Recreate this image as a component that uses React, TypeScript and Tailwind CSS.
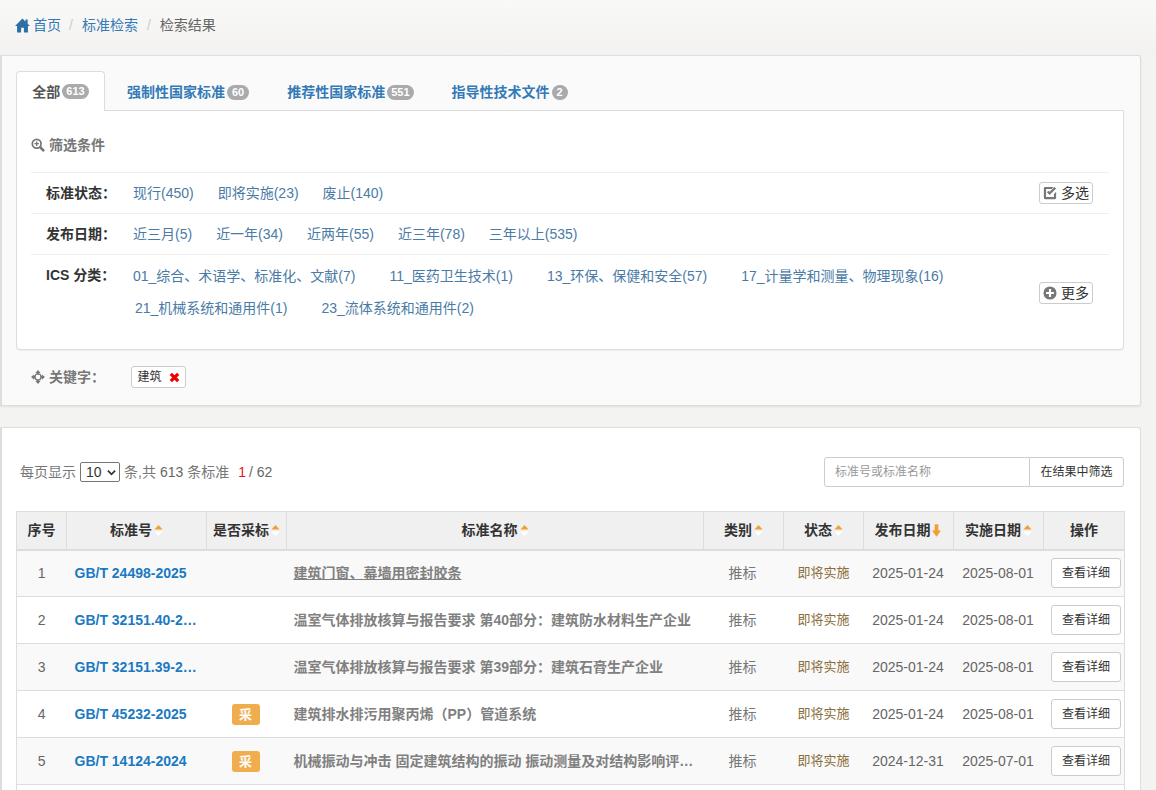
import type { ReactNode } from 'react';

interface Row {
  no: number;
  code: string;
  cai: boolean;
  name: string;
  pub: string;
  impl: string;
}

const rows: Row[] = [
  { no: 1, code: 'GB/T 24498-2025', cai: false, name: '建筑门窗、幕墙用密封胶条', pub: '2025-01-24', impl: '2025-08-01' },
  { no: 2, code: 'GB/T 32151.40-2025', cai: false, name: '温室气体排放核算与报告要求 第40部分：建筑防水材料生产企业', pub: '2025-01-24', impl: '2025-08-01' },
  { no: 3, code: 'GB/T 32151.39-2025', cai: false, name: '温室气体排放核算与报告要求 第39部分：建筑石膏生产企业', pub: '2025-01-24', impl: '2025-08-01' },
  { no: 4, code: 'GB/T 45232-2025', cai: true, name: '建筑排水排污用聚丙烯（PP）管道系统', pub: '2025-01-24', impl: '2025-08-01' },
  { no: 5, code: 'GB/T 14124-2024', cai: true, name: '机械振动与冲击 固定建筑结构的振动 振动测量及对结构影响评价的指南', pub: '2024-12-31', impl: '2025-07-01' },
];

const tabs = [
  { label: '强制性国家标准', count: 60 },
  { label: '推荐性国家标准', count: 551 },
  { label: '指导性技术文件', count: 2 },
];

function Badge({ count }: { count: number }) {
  // short counts get a little more room, as in the original pill
  return (
    <span className={`ml-[2px] inline-block rounded-[10px] bg-[#aaaaaa] text-[11px] leading-[15px] font-bold text-white ${count < 100 ? 'px-[5px]' : 'px-[4px]'}`}>
      {count}
    </span>
  );
}

function SortArrow({ active }: { active?: boolean }) {
  if (active) {
    return (
      <svg viewBox="0 0 10 14" className="ml-px inline-block h-[13px] w-[9px] align-[-2px]">
        <path d="M3 0h4v7h3l-5 7-5-7h3z" fill="#f0a030" />
      </svg>
    );
  }
  return (
    <svg viewBox="0 0 10 14" className="ml-[2px] inline-block h-[13px] w-[9px] align-[-2px]">
      <path d="M5 1l4.500 5h-9z" fill="#f0a030" />
      <path d="M5 13l4.500-5h-9z" fill="#ffffff" />
    </svg>
  );
}

function FilterRow({ label, children, extra, className, labelClass }: { label: string; children: ReactNode; extra?: ReactNode; className?: string; labelClass?: string }) {
  return (
    <div className={`flex border-t border-[#eeeeee] ${className ?? ''}`}>
      <div className={`w-[102px] shrink-0 pl-[15px] font-bold text-[#333333] ${labelClass ?? ''}`}>{label}</div>
      <div className="flex-1">{children}</div>
      {extra}
    </div>
  );
}

function SmallButton({ icon, text }: { icon: ReactNode; text: string }) {
  return (
    <span className="mr-[16px] flex h-[22px] w-[54px] shrink-0 items-center justify-center gap-[4px] self-center rounded-[3px] border border-[#cccccc] bg-white text-[#333333]">
      {icon}
      {text}
    </span>
  );
}

export default function App() {
  return (
    <div className="h-[790px] w-[1156px] overflow-hidden bg-[#f3f3f1] font-['Liberation_Sans','Noto_Sans_CJK_SC',sans-serif] text-[14px] leading-[20px] text-[#777777]">
      <div className="flex h-[55px] items-center bg-gradient-to-b from-[#f9f9f8] to-[#f3f2f0] pb-[5px] pl-[15px]">
        <svg viewBox="0 0 16 16" className="mr-[3px] h-[15px] w-[15px]">
          <path d="M8 .5L0 8.500h2.200V15.500h4.300v-5h3v5h4.300V8.500H16l-2.500-2.500V1.500h-2.300v2.200z" fill="#2f6fa8" />
        </svg>
        <span className="text-[#337ab7]">首页</span>
        <span className="mr-[9px] ml-[8px] text-[#cccccc]">/</span>
        <span className="text-[#337ab7]">标准检索</span>
        <span className="mr-[9px] ml-[9px] text-[#cccccc]">/</span>
        <span className="text-[#666666]">检索结果</span>
      </div>

      <div className="h-[351px] w-[1141px] rounded-r-[3px] border border-l-2 border-[#dddddd] bg-[#fafafa] pt-[15px] pr-[16px] pl-[14px] shadow-[0_1px_2px_rgba(0,0,0,0.08)]">
        <div className="flex h-[39px] items-stretch">
          <div className="z-10 flex h-[40px] w-[89px] items-center justify-center rounded-t-[4px] border border-b-0 border-[#dddddd] bg-white font-bold text-[#555555]">
            全部<Badge count={613} />
          </div>
          <div className="flex gap-[38px] pl-[22px]">
            {tabs.map((t) => (
              <div key={t.label} className="flex items-center pt-[3px] font-bold text-[#337ab7]">
                {t.label}
                <Badge count={t.count} />
              </div>
            ))}
          </div>
        </div>
        <div className="h-[240px] rounded-b-[4px] border border-[#dddddd] bg-white px-[14px] shadow-[0_1px_1px_rgba(0,0,0,0.05)]">
          <div className="flex h-[61px] items-center gap-[4px] pt-[6px] font-bold text-[#777777]">
            <svg viewBox="0 0 16 16" className="h-[14px] w-[14px]">
              <circle cx="6.500" cy="6.500" r="5" fill="none" stroke="#777777" strokeWidth="2" />
              <path d="M10 10l5 5" stroke="#777777" strokeWidth="3" />
              <path d="M6.500 4v5M4 6.500h5" stroke="#777777" strokeWidth="1.500" />
            </svg>
            筛选条件
          </div>
          <FilterRow
            label="标准状态："
            className="h-[41px] items-center"
            extra={
              <SmallButton
                text="多选"
                icon={
                  <svg viewBox="0 0 16 16" className="h-[14px] w-[14px]">
                    <path d="M12.500 9v3.500h-9v-9H10l2-2.500H2.500A1.500 1.500 0 0 0 1 2.500v11A1.500 1.500 0 0 0 2.500 15h11a1.500 1.500 0 0 0 1.500-1.500V6.500z" fill="#777777" />
                    <path d="M4.500 7l3 3.200L15 2.800 13.200 1 7.500 6.700 6.200 5.400z" fill="#777777" />
                  </svg>
                }
              />
            }
          >
            <div className="flex gap-[24px] text-[#4a7ba6]">
              <span>现行(450)</span>
              <span>即将实施(23)</span>
              <span>废止(140)</span>
            </div>
          </FilterRow>
          <FilterRow label="发布日期：" className="h-[41px] items-center">
            <div className="flex gap-[24px] text-[#4a7ba6]">
              <span>近三月(5)</span>
              <span>近一年(34)</span>
              <span>近两年(55)</span>
              <span>近三年(78)</span>
              <span>三年以上(535)</span>
            </div>
          </FilterRow>
          <FilterRow
            label="ICS 分类："
            className="h-[75px] pt-[11px]"
            labelClass="mt-[-1px]"
            extra={
              <div className="flex items-center self-stretch pb-[9px]">
                <SmallButton
                  text="更多"
                  icon={
                    <svg viewBox="0 0 16 16" className="h-[14px] w-[14px]">
                      <circle cx="8" cy="8" r="7.500" fill="#777777" />
                      <path d="M8 3.500v9M3.500 8h9" stroke="#ffffff" strokeWidth="2.500" />
                    </svg>
                  }
                />
              </div>
            }
          >
            <div className="flex gap-[34px] text-[#4a7ba6]">
              <span>01_综合、术语学、标准化、文献(7)</span>
              <span>11_医药卫生技术(1)</span>
              <span>13_环保、保健和安全(57)</span>
              <span>17_计量学和测量、物理现象(16)</span>
            </div>
            <div className="mt-[12px] flex gap-[34px] pl-[2px] text-[#4a7ba6]">
              <span>21_机械系统和通用件(1)</span>
              <span>23_流体系统和通用件(2)</span>
            </div>
          </FilterRow>
        </div>
        <div className="mt-[16px] flex h-[22px] items-center pl-[15px]">
          <svg viewBox="0 0 16 16" className="mr-[4px] h-[14px] w-[14px]">
            <path d="M8 0l3 3.500H9.200V5H6.800V3.500H5zM8 16l-3-3.500h1.800V11h2.400v1.500H11zM0 8l3.500-3v1.800H5v2.400H3.500V11zM16 8l-3.500 3V9.200H11V6.800h1.500V5z" fill="#777777" />
            <circle cx="8" cy="8" r="3.500" fill="none" stroke="#777777" strokeWidth="1.500" />
          </svg>
          <span className="w-[82px] font-bold">关键字：</span>
          <span className="flex h-[22px] w-[55px] items-center justify-center gap-[7px] rounded-[3px] border border-[#cccccc] bg-white text-[12px] text-[#333333]">
            建筑
            <svg viewBox="0 0 12 12" className="h-[11px] w-[11px]">
              <path d="M2 2l8 8M10 2l-8 8" stroke="#ee0000" strokeWidth="3.500" />
            </svg>
          </span>
        </div>
      </div>

      <div className="mt-[21px] h-[400px] w-[1141px] rounded-tr-[3px] border-t border-r border-l-2 border-[#dddddd] bg-white pr-[16px] pl-[14px]">
        <div className="flex h-[83px] items-start justify-between pt-[29px]">
          <div className="flex h-[30px] items-center pl-[4px]">
            每页显示
            <span className="mr-[4px] ml-[4px] flex h-[20px] w-[40px] items-center justify-between rounded-[2px] border border-[#767676] bg-white pr-[3px] pl-[5px] text-[#333333]">
              10
              <svg viewBox="0 0 10 10" className="h-[9px] w-[9px]">
                <path d="M1 3l4 4 4-4" fill="none" stroke="#333333" strokeWidth="2" />
              </svg>
            </span>
            条,共 <span className="mx-[4px] text-[#666666]">613</span> 条标准
            <span className="mr-[3px] ml-[9px] text-[#ee1111]">1</span>
            <span className="text-[#666666]">/ 62</span>
          </div>
          <div className="flex h-[30px] w-[300px] text-[12px]">
            <div className="flex flex-1 items-center rounded-l-[3px] border border-[#cccccc] bg-white pl-[10px] text-[#999999]">标准号或标准名称</div>
            <div className="flex w-[94px] items-center justify-center rounded-r-[3px] border border-l-0 border-[#cccccc] bg-white text-[#333333]">在结果中筛选</div>
          </div>
        </div>

        <table className="w-[1108px] table-fixed border-collapse">
          <colgroup>
            <col className="w-[50px]" />
            <col className="w-[140px]" />
            <col className="w-[80px]" />
            <col className="w-[417px]" />
            <col className="w-[80px]" />
            <col className="w-[80px]" />
            <col className="w-[90px]" />
            <col className="w-[90px]" />
            <col className="w-[81px]" />
          </colgroup>
          <thead>
            <tr className="h-[38px] bg-[#f0f0f0] text-center font-bold text-[#333333]">
              <th className="border border-b-2 border-[#dddddd]">序号</th>
              <th className="border border-b-2 border-[#dddddd]">标准号<SortArrow /></th>
              <th className="border border-b-2 border-[#dddddd] whitespace-nowrap">是否采标<SortArrow /></th>
              <th className="border border-b-2 border-[#dddddd]">标准名称<SortArrow /></th>
              <th className="border border-b-2 border-[#dddddd]">类别<SortArrow /></th>
              <th className="border border-b-2 border-[#dddddd]">状态<SortArrow /></th>
              <th className="border border-b-2 border-[#dddddd] pr-[2px] whitespace-nowrap">发布日期<SortArrow active /></th>
              <th className="border border-b-2 border-[#dddddd] whitespace-nowrap">实施日期<SortArrow /></th>
              <th className="border border-b-2 border-[#dddddd]">操作</th>
            </tr>
          </thead>
          <tbody>
            {rows.map((r) => (
              <tr key={r.no} className={`h-[47px] border-b border-[#dddddd] text-center ${r.no % 2 === 1 ? 'bg-[#f9f9f9]' : 'bg-white'}`}>
                <td className="border-l border-[#dddddd] text-[#666666]">{r.no}</td>
                <td className="truncate pr-[8px] pl-[8px] text-left font-bold text-[#1b7ac2]">{r.code}</td>
                <td className="pr-[2px]">
                  {r.cai && (
                    <span className="inline-block h-[21px] w-[28px] rounded-[3px] bg-[#f0ad4e] text-[13px] leading-[21px] font-bold text-white">采</span>
                  )}
                </td>
                <td className={`truncate pr-[8px] pl-[7px] text-left font-bold text-[#808080] ${r.no === 1 ? 'underline' : ''}`}>{r.name}</td>
                <td className="pr-[2px] text-[#777777]">推标</td>
                <td className="text-[13px] text-[#8a6d3b]">即将实施</td>
                <td className="pr-[1px] text-[#666666]">{r.pub}</td>
                <td className="pr-[1px] text-[#666666]">{r.impl}</td>
                <td className="border-r border-[#dddddd] pr-[3px] text-right">
                  <span className="inline-block h-[30px] w-[70px] rounded-[3px] border border-[#cccccc] bg-white text-center align-middle text-[12px] leading-[28px] text-[#333333]">查看详细</span>
                </td>
              </tr>
            ))}
            <tr className="h-[47px]">
              <td colSpan={9} className="border-x border-[#dddddd]" />
            </tr>
          </tbody>
        </table>
      </div>
    </div>
  );
}
